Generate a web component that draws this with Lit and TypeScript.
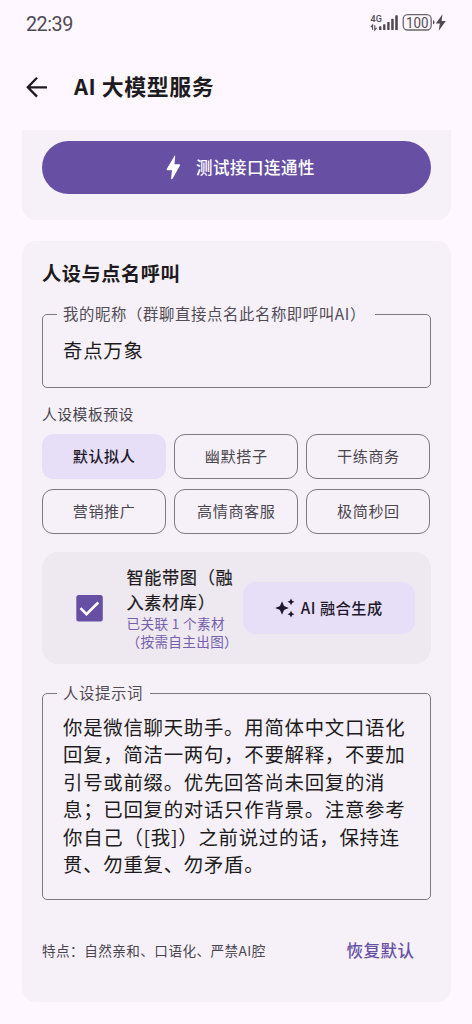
import { LitElement, html, css, svg } from "lit";
import { customElement, state } from "lit/decorators.js";
import { classMap } from "lit/directives/class-map.js";

@customElement("status-bar")
class StatusBar extends LitElement {
  static styles = css`
    :host {
      display: flex;
      justify-content: space-between;
      align-items: center;
      height: 46px;
      padding: 0 24px 0 26px;
      color: #4f4a52;
      font-family: Roboto, sans-serif;
    }
    .time {
      font-size: 19.8px;
      letter-spacing: -0.5px;
      padding-top: 2px;
    }
    .icons {
      display: block;
    }
    .net {
      font: 500 9px Roboto, sans-serif;
    }
    .level {
      font: 400 15.5px Roboto, sans-serif;
    }
  `;
  render() {
    return html`
      <span class="time">22:39</span>
      <svg class="icons" width="78" height="24" viewBox="0 0 78 24" fill="#4f4a52">
        <text class="net" x="0.5" y="11.3" textLength="11.5">4G</text>
        <path d="M0.800 16.200 2.600 14v4.800M6.600 16.800 4.800 19v-4.800" stroke="#4f4a52" stroke-width="1.1" fill="none" />
        <rect x="9" y="15.3" width="2.4" height="3.7" rx="0.6" />
        <rect x="13.1" y="13.3" width="2.4" height="5.700" rx="0.6" />
        <rect x="17.2" y="11" width="2.4" height="8" rx="0.6" />
        <rect x="21.2" y="7.8" width="2.500" height="11.200" rx="0.6" />
        <rect x="25.200" y="4.3" width="2.600" height="14.700" rx="0.6" />
        <rect x="33.2" y="3.7" width="28" height="15.300" rx="4.5" fill="none" stroke="#6a656d" stroke-width="1.3" />
        <text class="level" x="35.900" y="16.900" textLength="22.500" lengthAdjust="spacingAndGlyphs">100</text>
        <path d="M63 9.3c2 .4 2 3.600 0 4z" />
        <path d="M72.500 3.300 65.800 12.600h4l-1 7.200 7-9.800h-4.200z" />
      </svg>
    `;
  }
}

@customElement("outlined-field")
class OutlinedField extends LitElement {
  static properties = { label: { type: String } };
  declare label: string;
  static styles = css`
    :host {
      display: block;
    }
    .box {
      box-sizing: border-box;
      height: 100%;
      min-width: 0;
      margin: 0;
      padding: 0 0 0 20px;
      border: 1.3px solid #7d7881;
      border-radius: 5px;
    }
    .label {
      margin-left: -6px;
      padding: 0 var(--notch-end, 7px) 1px 6px;
      height: 22px;
      line-height: 21px;
      font-size: 15.4px;
      letter-spacing: 0.6px;
      color: #514c55;
      white-space: nowrap;
    }
  `;
  render() {
    return html`<fieldset class="box"><legend class="label">${this.label}</legend><slot></slot></fieldset>`;
  }
}

const PRESETS = ["默认拟人", "幽默搭子", "干练商务", "营销推广", "高情商客服", "极简秒回"];

const PROMPT = [
  "你是微信聊天助手。用简体中文口语化",
  "回复，简洁一两句，不要解释，不要加",
  "引号或前缀。优先回答尚未回复的消",
  "息；已回复的对话只作背景。注意参考",
  "你自己（[我]）之前说过的话，保持连",
  "贯、勿重复、勿矛盾。",
];

const sparkle = (cx: number, cy: number, r: number, waist: number) => {
  const k = r * waist;
  return svg`<path d="M${cx} ${cy - r}L${cx + k} ${cy - k}L${cx + r} ${cy}L${cx + k} ${cy + k}L${cx} ${cy + r}L${cx - k} ${cy + k}L${cx - r} ${cy}L${cx - k} ${cy - k}Z" />`;
};

@customElement("app-root")
class AppRoot extends LitElement {
  @state() private selected = 0;

  static styles = css`
    :host {
      display: block;
      box-sizing: border-box;
      height: 1024px;
      overflow: hidden;
      background: #fef7ff;
      color: #1d1b20;
      font-family: "Noto Sans CJK SC", sans-serif;
      text-spacing-trim: space-all;
      white-space: nowrap;
    }
    .topbar {
      display: flex;
      align-items: center;
      box-sizing: border-box;
      height: 84px;
      padding: 0 0 2px 26px;
      gap: 26px;
    }
    .title {
      margin: 0;
      padding-bottom: 3px;
      font-size: 21.9px;
      font-weight: 700;
      letter-spacing: 0.55px;
    }
    .card {
      box-sizing: border-box;
      margin: 0 21px 0 22px;
      padding: 0 20.5px 0 20px;
      background: #f6f1f8;
      border-radius: 14px;
    }
    .card.cut {
      height: 90px;
      padding-top: 11px;
      border-radius: 0 0 14px 14px;
      margin-bottom: 21px;
    }
    .card.main {
      height: 761px;
    }
    .test {
      display: flex;
      align-items: center;
      justify-content: center;
      gap: 15.5px;
      height: 52.5px;
      padding-left: 8px;
      border-radius: 27px;
      background: #6750a4;
      color: #fff;
      font-size: 16.5px;
      font-weight: 500;
      letter-spacing: 0.5px;
    }
    .test span {
      padding-bottom: 1px;
    }
    .heading {
      margin: 0;
      padding-top: 17px;
      height: 45px;
      line-height: 31px;
      font-size: 19.2px;
      font-weight: 700;
      letter-spacing: 0.55px;
    }
    .nick {
      height: 84.500px;
      --notch-end: 9px;
    }
    .value {
      padding-top: 10px;
      line-height: 28px;
      font-size: 19.4px;
      letter-spacing: 0.75px;
    }
    .sub {
      height: 46.500px;
      line-height: 52px;
      font-size: 14.8px;
      letter-spacing: 0.5px;
      color: #49454f;
    }
    .chips {
      display: grid;
      grid-template-columns: repeat(3, 1fr);
      grid-auto-rows: 45px;
      gap: 10px 8px;
    }
    .chip {
      display: flex;
      align-items: center;
      justify-content: center;
      padding-bottom: 3px;
      border: 1.3px solid #7d7881;
      border-radius: 11px;
      font-size: 15.1px;
      letter-spacing: 0.6px;
      color: #49454f;
    }
    .chip.on {
      border-color: #e7def8;
      background: #e7def8;
      color: #1d192b;
      font-weight: 500;
    }
    .panel {
      display: flex;
      align-items: center;
      box-sizing: border-box;
      height: 112px;
      margin-top: 18px;
      padding: 0 16px 0 33.5px;
      border-radius: 16px;
      background: #eee9f0;
    }
    .check {
      flex: none;
      width: 27px;
      height: 27px;
      margin-right: 24px;
    }
    .about {
      width: 116.500px;
      padding-bottom: 3.500px;
    }
    .name {
      padding-top: 1.500px;
      line-height: 25px;
      font-size: 17.2px;
      letter-spacing: 0.6px;
      -webkit-text-stroke: 0.2px #1d1b20;
    }
    .linked {
      line-height: 18px;
      font-size: 13.6px;
      letter-spacing: 0.35px;
      color: #7460ad;
    }
    .merge {
      display: flex;
      align-items: center;
      justify-content: center;
      gap: 6px;
      flex: 1;
      height: 52px;
      border-radius: 13px;
      background: #e7def8;
      color: #1d192b;
      font-size: 15.2px;
      font-weight: 500;
      letter-spacing: 0.5px;
    }
    .merge span {
      padding-bottom: 2px;
    }
    .prompt {
      height: 218px;
      margin-top: 17.500px;
    }
    .lines {
      padding-top: 8px;
      line-height: 27.6px;
      font-size: 19.4px;
      letter-spacing: 0.75px;
    }
    .foot {
      display: flex;
      align-items: center;
      justify-content: space-between;
      height: 100px;
      padding-right: 16px;
    }
    .trait {
      font-size: 13.600px;
      letter-spacing: 0.45px;
      color: #49454f;
    }
    .reset {
      font-size: 16.500px;
      font-weight: 500;
      letter-spacing: 0.5px;
      color: #6750a4;
    }
  `;

  render() {
    return html`
      <status-bar></status-bar>
      <header class="topbar">
        <svg width="22" height="22" viewBox="0 0 22 22" fill="none" stroke="#1d1b20" stroke-width="2.3">
          <path d="M21 11.300H2.500M11 1.700 1.800 11.300l9.200 9.300" />
        </svg>
        <h1 class="title">AI 大模型服务</h1>
      </header>
      <section class="card cut">
        <div class="test">
          <svg width="15" height="25" viewBox="0 0 15 25" fill="#fff">
            <path d="M8.600.700Q9.300.200 9.200 1.200L8.500 9.300H13.300Q14.600 9.400 14 10.500L6.500 23.700Q5.100 25.200 5.100 23.300L6 15.200H1.700Q.3 15 .9 13.800z" />
          </svg>
          <span>测试接口连通性</span>
        </div>
      </section>
      <section class="card main">
        <h2 class="heading">人设与点名呼叫</h2>
        <outlined-field class="nick" label="我的昵称（群聊直接点名此名称即呼叫AI）">
          <div class="value">奇点万象</div>
        </outlined-field>
        <div class="sub">人设模板预设</div>
        <div class="chips">
          ${PRESETS.map(
            (p, i) => html`<div class=${classMap({ chip: true, on: i === this.selected })} @click=${() => (this.selected = i)}>${p}</div>`
          )}
        </div>
        <div class="panel">
          <svg class="check" viewBox="0 0 27 27">
            <rect x="0.300" y="0" width="26.500" height="26.500" rx="2.500" fill="#6750a4" />
            <path d="M4.500 13.200l6 6L22.300 7.500" fill="none" stroke="#fff" stroke-width="2.600" />
          </svg>
          <div class="about">
            <div class="name">智能带图（融<br />入素材库）</div>
            <div class="linked">已关联 1 个素材<br />（按需自主出图）</div>
          </div>
          <div class="merge">
            <svg width="20" height="20" viewBox="0 0 20 20" fill="#1d192b">
              ${sparkle(7, 10, 6.8, 0.3)}${sparkle(16, 3.800, 3.400, 0.33)}${sparkle(16, 16.200, 3.400, 0.33)}
            </svg>
            <span>AI 融合生成</span>
          </div>
        </div>
        <outlined-field class="prompt" label="人设提示词">
          <div class="lines">${PROMPT.map((l) => html`<div>${l}</div>`)}</div>
        </outlined-field>
        <div class="foot">
          <span class="trait">特点：自然亲和、口语化、严禁AI腔</span>
          <span class="reset">恢复默认</span>
        </div>
      </section>
    `;
  }
}
